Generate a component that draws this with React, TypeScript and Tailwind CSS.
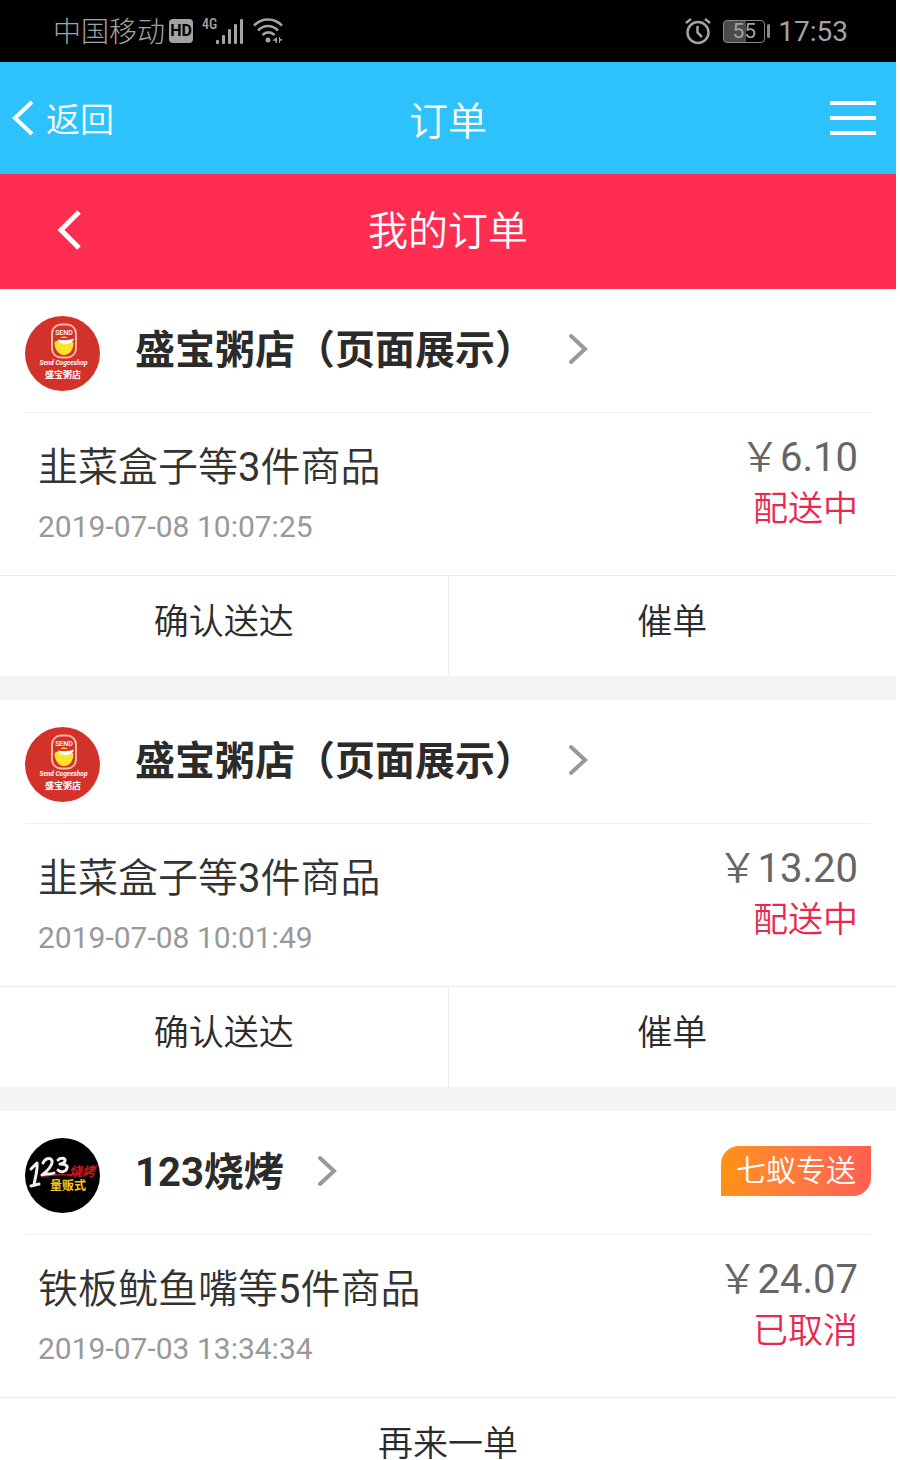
type Order = {
  id: number;
  shop: string;
  logo: 'congee' | 'bbq';
  badge?: string;
  product: string;
  count: number;
  time: string;
  price: string;
  status: string;
  actions: string[];
};

const orders: Order[] = [
  {
    id: 1,
    shop: '盛宝粥店（页面展示）',
    logo: 'congee',
    product: '韭菜盒子',
    count: 3,
    time: '2019-07-08 10:07:25',
    price: '6.10',
    status: '配送中',
    actions: ['确认送达', '催单'],
  },
  {
    id: 2,
    shop: '盛宝粥店（页面展示）',
    logo: 'congee',
    product: '韭菜盒子',
    count: 3,
    time: '2019-07-08 10:01:49',
    price: '13.20',
    status: '配送中',
    actions: ['确认送达', '催单'],
  },
  {
    id: 3,
    shop: '123烧烤',
    logo: 'bbq',
    badge: '七蚁专送',
    product: '铁板鱿鱼嘴',
    count: 5,
    time: '2019-07-03 13:34:34',
    price: '24.07',
    status: '已取消',
    actions: ['再来一单'],
  },
];

function CongeeLogo() {
  return (
    <svg viewBox="0 0 75 75" className="size-[75px] shrink-0" aria-hidden="true">
      <circle cx="37.5" cy="37.5" r="37.5" fill="#d3322b" />
      <rect x="27" y="8.5" width="24" height="33" rx="9" fill="#d3322b" stroke="#f6b9a4" strokeWidth="2" />
      <text x="39" y="18.5" textAnchor="middle" fontSize="7" fontWeight="500" fill="#fff">SEND</text>
      <path d="M29.5 27c1-3 5-3 6.5-1 2 2 5 2 7 0 2-1 5-1 5.500 1 0 7-4 12-9.500 12s-9.500-6-9.500-12z" fill="#fde428" />
      <path d="M33 23.5c4 1 11 1 16-1-1 4-5 5.500-8 5.500-4 0-7-1-8-4.500z" fill="#fff" />
      <path d="M35.5 22c1-2 6-2 7 0z" fill="#fde428" />
      <text x="38.5" y="49" textAnchor="middle" fontSize="6.500" fontWeight="700" fontStyle="italic" fill="#fff">
        Send Cogeeshop
      </text>
      <text x="38" y="62" textAnchor="middle" fontSize="9" fontWeight="700" fill="#fff">盛宝粥店</text>
    </svg>
  );
}

function BbqLogo() {
  return (
    <svg viewBox="0 0 75 75" className="size-[75px] shrink-0" aria-hidden="true">
      <circle cx="37.5" cy="37.5" r="37.5" fill="#000" />
      <path d="M14 40c9-4 17-5 30-4l23-1-22 3c-12-1-20 0-31 2z" fill="#b3121a" />
      <text x="57" y="38" textAnchor="middle" fontSize="13" fontWeight="700" fontStyle="italic" fill="#d3171d">烧烤</text>
      <g fill="none" stroke="#f2f2f2" strokeLinecap="round" strokeLinejoin="round">
        <path d="M6 31l6-6c1 6-2 15-3 22M6 48l8-2" strokeWidth="3" />
        <path d="M18 25c3-6 10-6 9 0-1 4-6 9-10 12 4-2 8 0 12-2" strokeWidth="3" />
        <path d="M33 22c3-3 8-2 7 1-1 2-3 3-5 3 4 0 8 1 7 4-1 4-6 5-9 2" strokeWidth="3" />
      </g>
      <text x="43" y="52" textAnchor="middle" fontSize="12" fontWeight="700" fill="#f3c522">量贩式</text>
    </svg>
  );
}

function StatusBar() {
  return (
    <div className="flex h-[62px] items-center justify-between bg-black pr-12 pl-[53px] text-[28px] font-normal text-[#a3a3a3]">
      <div className="flex items-center">
        <span className="pt-1 font-light">中国移动</span>
        <span className="ml-1 flex h-6 w-6 items-center justify-center rounded bg-[#a3a3a3] text-[16px] font-bold text-black">
          HD
        </span>
        <svg viewBox="0 0 44 30" className="ml-2 h-[30px] w-[44px]" fill="currentColor" aria-hidden="true">
          <text x="1" y="13" fontSize="14" fontFamily="Roboto Condensed, Roboto, sans-serif" fontWeight="500">4G</text>
          <rect x="15" y="24" width="3" height="4" rx="1" />
          <rect x="21" y="19" width="3" height="9" rx="1" />
          <rect x="27" y="13" width="3" height="15" rx="1" />
          <rect x="33" y="8" width="3" height="20" rx="1" />
          <rect x="39" y="3" width="3" height="25" rx="1" />
        </svg>
        <svg viewBox="0 0 32 28" className="ml-2 h-7 w-8" fill="none" stroke="currentColor" strokeWidth="2.6" aria-hidden="true">
          <path d="M1 8.5c8-8 20-8 28 0M5 13.500c6-6 14-6 20 0M9.500 18c3.500-3.500 8.500-3.500 12 0" />
          <circle cx="15" cy="23" r="2.5" fill="currentColor" stroke="none" />
          <path d="M24 20v6h-1.500v-2l-3-.500zM26 20v6h1v-2l3-1-3-1.500V20z" fill="currentColor" stroke="none" />
        </svg>
      </div>
      <div className="flex items-center">
        <svg viewBox="0 0 26 28" className="h-7 w-[26px]" fill="none" stroke="currentColor" strokeWidth="2.5" aria-hidden="true">
          <circle cx="13" cy="15.5" r="10.5" />
          <path d="M12.5 9v6.500l4.500 4.500M1 6l5-4M25 6l-5-4" />
        </svg>
        <div className="ml-3 flex h-[23px] w-[42px] items-center justify-center rounded border border-[#8a8a8a] bg-linear-to-r from-[#4a4a4a] from-55% to-black to-55% text-[21px] leading-none">
          55
        </div>
        <span className="ml-0.5 h-[14px] w-[3px] rounded-sm bg-[#8a8a8a]" />
        <span className="ml-2 pt-0.5 leading-none">17:53</span>
      </div>
    </div>
  );
}

function OrderCard({ order }: { order: Order }) {
  return (
    <article className="bg-white">
      <div className="mx-[25px] flex h-[124px] items-start border-b border-[#efefef] pt-[27px]">
        {order.logo === 'congee' ? <CongeeLogo /> : <BbqLogo />}
        <a href="#" className="ml-[35px] flex h-[66px] items-center text-[40px] font-bold whitespace-nowrap text-[#2b2b2b]">
          <span className="pt-1">{order.shop}</span>
          <svg viewBox="0 0 20 32" className="ml-[34px] h-8 w-5" fill="none" stroke="#999" strokeWidth="4" strokeLinecap="round" aria-hidden="true">
            <path d="M2 3l14 13L2 29" />
          </svg>
        </a>
        {order.badge && (
          <div className="ml-auto flex h-[66px] items-center">
            <span className="rounded-tl-[18px] rounded-br-[18px] bg-linear-to-r from-[#ff9210] to-[#ff5f52] px-[15px] text-[30px] leading-[50px] text-white">
              {order.badge}
            </span>
          </div>
        )}
      </div>

      <div className="flex h-[162px] justify-between px-[38px]">
        <div className="pt-[25px]">
          <h2 className="text-[40px] leading-[60px] text-[#333]">
            {order.product}等<span className="font-normal">{order.count}</span>件商品
          </h2>
          <p className="text-[30px] leading-[58px] font-normal text-[#999]">{order.time}</p>
        </div>
        <div className="pt-5 text-right">
          <p className="text-[40px] leading-[50px] text-[#666]">
            ￥<span className="font-normal">{order.price}</span>
          </p>
          <p className="text-[35px] leading-[54px] text-[#e8284f]">{order.status}</p>
        </div>
      </div>

      <div className="flex h-[101px] divide-x divide-[#ececec] border-t border-[#ececec]">
        {order.actions.map((action) => (
          <button key={action} type="button" className="flex-1 pb-1.5 text-[35px] text-[#2b2b2b]">
            {action}
          </button>
        ))}
      </div>
    </article>
  );
}

export default function App() {
  return (
    <div className="bg-white pr-1 font-[Roboto,'Noto_Sans_CJK_SC',sans-serif] font-[350]" lang="zh-CN">
      <StatusBar />

      <header className="grid h-28 grid-cols-[1fr_auto_1fr] items-center bg-[#2ec2fc] pr-5 pl-3 text-white">
        <a href="#" className="flex items-center gap-3 text-[34px]">
          <svg viewBox="0 0 22 36" className="h-9 w-[22px]" fill="none" stroke="currentColor" strokeWidth="4" aria-hidden="true">
            <path d="M20 2L3 18l17 16" />
          </svg>
          <span className="pt-1">返回</span>
        </a>
        <h1 className="pt-2 pl-2 text-[39px]">订单</h1>
        <button type="button" aria-label="菜单" className="flex flex-col gap-[11px] justify-self-end">
          <span className="h-1 w-[46px] bg-white" />
          <span className="h-1 w-[46px] bg-white" />
          <span className="h-1 w-[46px] bg-white" />
        </button>
      </header>

      <div className="grid h-[115px] grid-cols-[1fr_auto_1fr] items-center bg-[#ff2d4f] px-[57px] pb-1 text-white">
        <button type="button" aria-label="返回" className="justify-self-start">
          <svg viewBox="0 0 25 42" className="h-[42px] w-[25px]" fill="none" stroke="currentColor" strokeWidth="5" aria-hidden="true">
            <path d="M22 3L4 21l18 18" />
          </svg>
        </button>
        <h2 className="pt-1 text-[40px]">我的订单</h2>
      </div>

      <main className="space-y-6 bg-[#f4f4f4]">
        {orders.map((order) => (
          <OrderCard key={order.id} order={order} />
        ))}
      </main>
    </div>
  );
}
